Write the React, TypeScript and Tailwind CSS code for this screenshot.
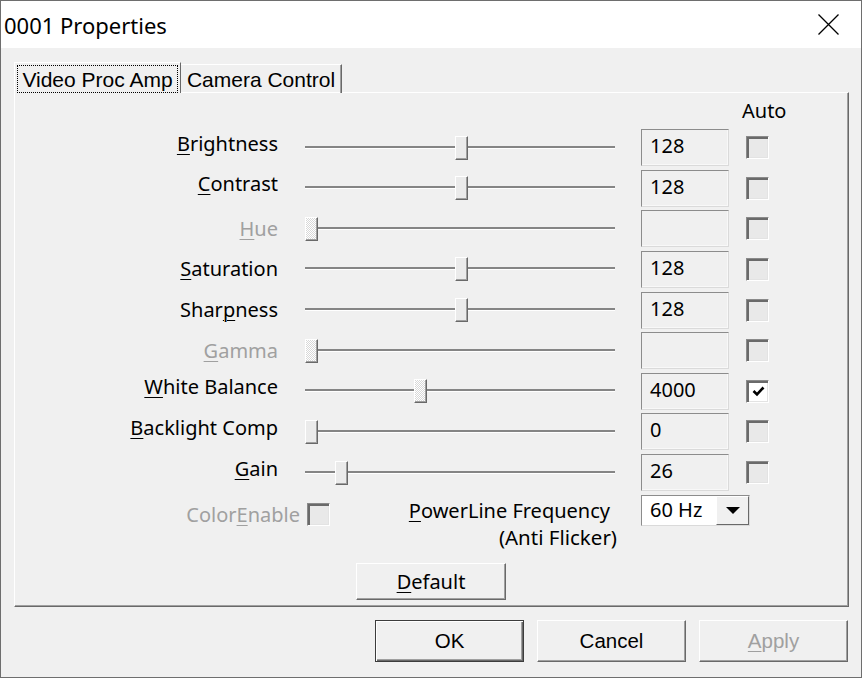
import clsx from 'clsx';

const rows = [
  { label: 'Brightness', u: 0, pos: 150, value: '128', lift: true },
  { label: 'Contrast', u: 0, pos: 150, value: '128', lift: true },
  { label: 'Hue', u: 0, pos: 0, value: '', disabled: true },
  { label: 'Saturation', u: 0, pos: 150, value: '128' },
  { label: 'Sharpness', u: 4, pos: 150, value: '128' },
  { label: 'Gamma', u: 0, pos: 0, value: '', disabled: true },
  { label: 'White Balance', u: 0, pos: 109, value: '4000', auto: true, dotted: true, lift: true },
  { label: 'Backlight Comp', u: 0, pos: 0, value: '0', lift: true },
  { label: 'Gain', u: 0, pos: 30, value: '26', lift: true },
];

function Mnemonic({ text, at }: { text: string; at: number }) {
  return (
    <>
      {text.slice(0, at)}
      <span className="underline decoration-1 underline-offset-[3px]">{text[at]}</span>
      {text.slice(at + 1)}
    </>
  );
}

function Slider({ pos, dotted }: { pos: number; dotted?: boolean }) {
  return (
    <div className="relative h-[24px] w-[310px]">
      <div className="absolute left-0 right-0 top-[10px] h-[3px] border-b border-white bg-[#858585]" />
      <div
        style={{ left: pos }}
        className={clsx(
          'absolute top-0 h-[24px] w-[13px] border border-l-white border-t-white border-r-[#696969] border-b-[#696969] shadow-[inset_-1px_-1px_#a0a0a0]',
          dotted
            ? 'bg-[repeating-conic-gradient(#ffffff_0%_25%,#d8d8d8_0%_50%)] [background-size:2px_2px]'
            : 'bg-[#ebebeb]'
        )}
      />
    </div>
  );
}

function Check({ on }: { on?: boolean }) {
  return (
    <div
      className={clsx(
        'flex h-[23px] w-[23px] items-center justify-center border border-t-[#8a8a8a] border-l-[#8a8a8a] border-r-white border-b-white shadow-[inset_2px_2px_#6a6a6a,inset_-1px_-1px_#e3e3e3]',
        on ? 'bg-white' : 'bg-[#e9e9e9]'
      )}
    >
      {on && (
        <svg width="13" height="11" viewBox="0 0 13 11" className="ml-[1px] mt-[1px]">
          <path d="M1.5 5 L5 8.5 L11.5 1.5" fill="none" stroke="black" strokeWidth="2.6" />
        </svg>
      )}
    </div>
  );
}

export default function App() {
  const sans = "font-['Noto_Sans',sans-serif]";
  const arial = "font-['Liberation_Sans',Arial,sans-serif]";

  return (
    <div className="flex h-[678px] w-[862px] flex-col border border-[#6e6e6e] bg-[#f0f0f0] text-black">
      {/* title bar */}
      <div className="flex h-[47px] items-center justify-between bg-white pl-[3px] pr-[22px]">
        <span className={clsx(sans, 'text-[22px] leading-none')}>0001 Properties</span>
        <svg width="21" height="21" viewBox="0 0 21 21">
          <path d="M0.5 0.5 L20.5 20.5 M20.5 0.5 L0.5 20.5" stroke="black" strokeWidth="1.3" />
        </svg>
      </div>

      <div className="flex flex-col pl-[13px] pt-[14px]">
        {/* tabs */}
        <div className={clsx(arial, 'relative z-10 -mb-px flex h-[31px] items-end text-[21px]')}>
          <div className="flex h-[31px] w-[167px] items-stretch border-l border-t border-white border-r border-r-[#696969] bg-[#f0f0f0] p-[2px] pb-0">
            <div className="flex flex-1 items-center justify-center border border-dotted border-black pt-[1px]">Video Proc Amp</div>
          </div>
          <div className="flex h-[29px] w-[161px] items-center justify-center border-t border-white border-r border-r-[#696969] pt-[1px] shadow-[inset_-1px_0_#a0a0a0]">
            Camera Control
          </div>
        </div>

        {/* panel */}
        <div className={clsx(sans, 'h-[515px] w-[835px] border border-l-white border-t-white border-r-[#696969] border-b-[#696969] text-[20px] shadow-[inset_-1px_-1px_#a0a0a0]')}>
          <div className="flex h-[36px] items-center pl-[727px]">Auto</div>

          <div className="flex flex-col gap-[3.625px]">
            {rows.map((r) => (
              <div key={r.label} className="flex h-[37px] items-center">
                <div
                  className={clsx(
                    'w-[263px] text-right leading-none',
                    r.disabled ? 'text-[#a0a0a0]' : 'text-black',
                    r.lift && '-translate-y-[4px]'
                  )}
                >
                  <Mnemonic text={r.label} at={r.u} />
                </div>
                <div className="ml-[27px]">
                  <Slider pos={r.pos} dotted={r.dotted || r.disabled} />
                </div>
                <div className="ml-[26px] flex h-[37px] w-[88px] items-center border border-t-[#8c8c8c] border-l-[#8c8c8c] border-r-[#dadada] border-b-[#dadada] pb-[3px] pl-[8px] leading-none shadow-[inset_-1px_-1px_#f8f8f8]">
                  {r.value}
                </div>
                <div className="ml-[17px]">
                  <Check on={r.auto} />
                </div>
              </div>
            ))}
          </div>

          {/* color enable + powerline */}
          <div className="mt-[4px] flex h-[52px] items-start">
            <div className="mt-[8px] flex w-[315px] items-center">
              <span className="flex-1 text-right leading-none text-[#a0a0a0]">
                <Mnemonic text="ColorEnable" at={5} />
              </span>
              <div className="ml-[7px]">
                <Check />
              </div>
            </div>
            <div className="mt-[3px] flex w-[287px] flex-col items-end leading-[26px]">
              <span className="pr-[7px]">
                <Mnemonic text="PowerLine Frequency" at={0} />
              </span>
              <span className="text-[20.5px]">(Anti Flicker)</span>
            </div>
            <div className="ml-[24px] flex h-[31px] w-[109px] border border-t-[#8c8c8c] border-l-[#8c8c8c] border-r-[#dadada] border-b-[#dadada]">
              <div className="flex flex-1 items-center bg-white pb-[1px] pl-[8px] leading-none">60 Hz</div>
              <div className="flex w-[33px] items-center justify-center border border-l-white border-t-white border-r-[#696969] border-b-[#696969] bg-[#f0f0f0]">
                <svg width="14" height="8" viewBox="0 0 14 8">
                  <path d="M0 0 H14 L7 7 Z" fill="black" />
                </svg>
              </div>
            </div>
          </div>

          <div className="ml-[341px] mt-[16px] flex h-[37px] w-[150px] items-center justify-center border border-l-white border-t-white border-r-[#696969] border-b-[#696969] leading-none shadow-[inset_-1px_-1px_#a0a0a0]">
            <Mnemonic text="Default" at={0} />
          </div>
        </div>

        {/* dialog buttons */}
        <div className={clsx(arial, 'ml-[361px] mt-[13px] flex gap-[13px] text-[20.5px]')}>
          <div className="flex h-[42px] w-[149px] items-center justify-center border border-[#3c3c3c] shadow-[inset_1px_1px_white,inset_-1px_-1px_#696969,inset_-2px_-2px_#a0a0a0]">
            OK
          </div>
          <div className="flex h-[42px] w-[149px] items-center justify-center border border-l-white border-t-white border-r-[#696969] border-b-[#696969] shadow-[inset_-1px_-1px_#a0a0a0]">
            Cancel
          </div>
          <div className="flex h-[42px] w-[149px] items-center justify-center border border-l-white border-t-white border-r-[#696969] border-b-[#696969] text-[#a0a0a0] shadow-[inset_-1px_-1px_#a0a0a0]">
            <Mnemonic text="Apply" at={0} />
          </div>
        </div>
      </div>
    </div>
  );
}
